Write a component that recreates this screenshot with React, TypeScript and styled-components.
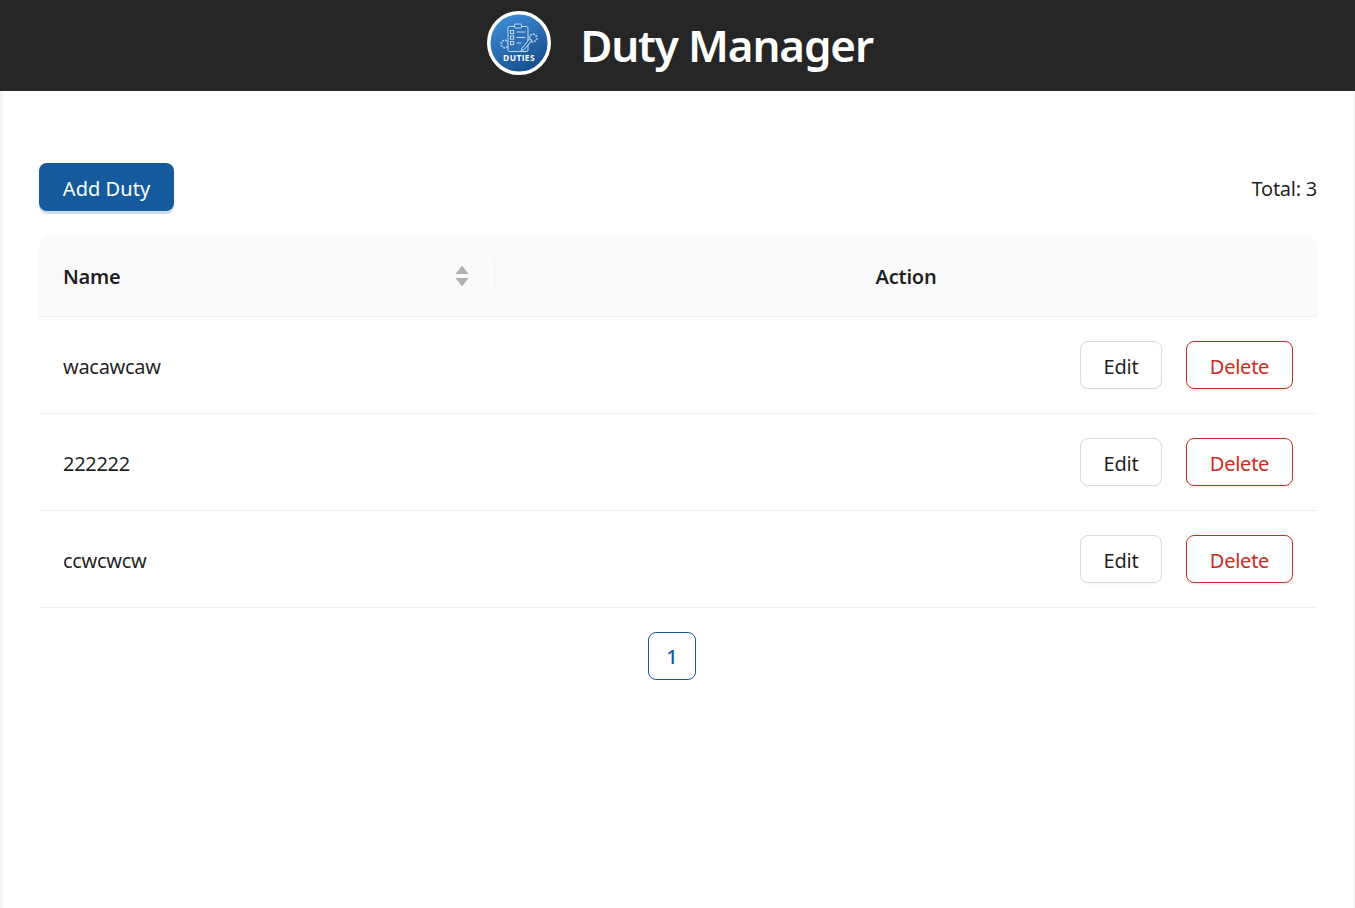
import React from "react";
import styled, { createGlobalStyle } from "styled-components";

const GlobalStyle = createGlobalStyle`
  html, body {
    margin: 0;
    padding: 0;
    background: #f5f5f5;
    font-family: "Noto Sans", "Open Sans", sans-serif;
    color: rgba(0, 0, 0, 0.88);
  }
  * { box-sizing: border-box; }
`;

const Page = styled.div`
  height: 908px;
  display: flex;
  flex-direction: column;
  overflow: hidden;
`;

const Header = styled.header`
  height: 91px;
  flex: none;
  background: #262626;
  display: flex;
  align-items: center;
  justify-content: center;
  gap: 29px;
  padding-left: 5px;
`;

const LogoMark = styled.svg`
  width: 64px;
  height: 64px;
  margin-bottom: 5px;
`;

const Title = styled.h1`
  margin: 0;
  font-size: 44px;
  font-weight: 600;
  letter-spacing: -1.15px;
  color: #fff;
  line-height: 91px;
`;

const Main = styled.main`
  flex: 1;
  margin: 0 2px 0 3px;
  background: #fff;
  padding: 72px 36px 0;
`;

const Toolbar = styled.div`
  display: flex;
  align-items: center;
  justify-content: space-between;
  height: 48px;
  margin-bottom: 24px;
`;

const AddButton = styled.button`
  width: 135px;
  height: 48px;
  border: none;
  border-radius: 8px;
  padding: 2px 0 0;
  background: #145a9c;
  box-shadow: 0 3px 0 rgba(20, 90, 156, 0.2);
  color: #fff;
  font: inherit;
  font-size: 20px;
  letter-spacing: 0.05px;
`;

const Total = styled.span`
  font-size: 20px;
  letter-spacing: -0.25px;
  padding-top: 2px;
`;

const Table = styled.div`
  display: grid;
  grid-template-columns: 456px 1fr;
`;

const HeadCell = styled.div<{ $center?: boolean }>`
  position: relative;
  height: 82px;
  display: flex;
  align-items: center;
  justify-content: ${(p) => (p.$center ? "center" : "space-between")};
  padding: 2px 24px 0;
  background: #fafafa;
  border-bottom: 1px solid #f0f0f0;
  font-size: 20px;
  font-weight: 600;
  letter-spacing: -0.25px;
  border-radius: ${(p) => (p.$center ? "0 12px 0 0" : "12px 0 0 0")};
`;

const Divider = styled.span`
  position: absolute;
  right: 0;
  top: 24px;
  width: 1px;
  height: 33px;
  background: #f0f0f0;
`;

const SortIcon = styled.svg`
  width: 14px;
  height: 22px;
  margin: -2px 2px 0 0;
  fill: #b0b0b0;
`;

const NameCell = styled.div`
  height: 97px;
  display: flex;
  align-items: center;
  padding: 2px 24px 0;
  border-bottom: 1px solid #f0f0f0;
  font-size: 20px;
  letter-spacing: -0.3px;
`;

const ActionCell = styled.div`
  height: 97px;
  display: flex;
  align-items: center;
  justify-content: flex-end;
  gap: 24px;
  padding: 0 24px;
  border-bottom: 1px solid #f0f0f0;
`;

const RowButton = styled.button<{ $danger?: boolean }>`
  width: ${(p) => (p.$danger ? "107px" : "82px")};
  height: 48px;
  border-radius: 8px;
  background: #fff;
  border: 1px solid ${(p) => (p.$danger ? "#cf2a22" : "#d9d9d9")};
  box-shadow: 0 2px 0 ${(p) => (p.$danger ? "rgba(255, 38, 5, 0.06)" : "rgba(0, 0, 0, 0.02)")};
  color: ${(p) => (p.$danger ? "#cf2a22" : "rgba(0, 0, 0, 0.88)")};
  font: inherit;
  font-size: 20px;
  letter-spacing: -0.25px;
  padding: 2px 0 0;
`;

const Pager = styled.nav`
  display: flex;
  justify-content: center;
  padding: 24px 12px 0 0;
`;

const PageItem = styled.button`
  width: 48px;
  height: 48px;
  border: 1px solid #145a9c;
  border-radius: 8px;
  background: #fff;
  color: #145a9c;
  font: inherit;
  font-size: 20px;
  font-weight: 500;
  padding: 0;
`;

function Logo() {
  return (
    <LogoMark viewBox="0 0 64 64">
      <defs>
        <linearGradient id="logoFill" x1="0.2" y1="0" x2="0.75" y2="1">
          <stop offset="0" stopColor="#3f8fdc" />
          <stop offset="1" stopColor="#134a86" />
        </linearGradient>
      </defs>
      <circle cx="32" cy="32" r="30.25" fill="url(#logoFill)" stroke="#fff" strokeWidth="3.5" />
      <g fill="none" stroke="#d3e4f6" strokeWidth="0.9">
        <g opacity="0.75">
          <circle cx="18" cy="33" r="3.800" strokeDasharray="2 0.900" strokeWidth="1.800" />
          <circle cx="46" cy="27" r="3.800" strokeDasharray="2 0.900" strokeWidth="1.800" />
        </g>
        <rect x="21" y="15.500" width="20" height="25" rx="1.500" fill="#2c6fb6" />
        <rect x="27.500" y="13" width="7" height="4" rx="1" fill="#2c6fb6" />
        <path d="M29.500 21h9M29.500 26.500h9M29.500 32h5" />
        <rect x="23.500" y="19.500" width="3.200" height="3.200" />
        <rect x="23.500" y="25" width="3.200" height="3.200" />
        <rect x="23.500" y="30.500" width="3.200" height="3.200" />
        <path d="M35 37l8-9.500 2 1.700-8 9.500-2.800 1z" fill="#2f6fb4" />
      </g>
      <text x="32" y="50" textAnchor="middle" fontFamily="'Open Sans', sans-serif" fontWeight="700" fontSize="8.400" letterSpacing="0.4" fill="#fff">
        DUTIES
      </text>
    </LogoMark>
  );
}

const duties = [
  { id: 1, name: "wacawcaw" },
  { id: 2, name: "222222" },
  { id: 3, name: "ccwcwcw" },
];

export default function App() {
  return (
    <Page>
      <GlobalStyle />
      <Header>
        <Logo />
        <Title>Duty Manager</Title>
      </Header>
      <Main>
        <Toolbar>
          <AddButton>Add Duty</AddButton>
          <Total>Total: 3</Total>
        </Toolbar>
        <Table>
          <HeadCell>
            Name
            <SortIcon viewBox="0 0 14 22">
              <path d="M7 0.500 L13.500 9 H0.500 Z" />
              <path d="M0.500 13 H13.500 L7 21.500 Z" />
            </SortIcon>
            <Divider />
          </HeadCell>
          <HeadCell $center>Action</HeadCell>
          {duties.map((d) => (
            <React.Fragment key={d.id}>
              <NameCell>{d.name}</NameCell>
              <ActionCell>
                <RowButton>Edit</RowButton>
                <RowButton $danger>Delete</RowButton>
              </ActionCell>
            </React.Fragment>
          ))}
        </Table>
        <Pager>
          <PageItem>1</PageItem>
        </Pager>
      </Main>
    </Page>
  );
}
